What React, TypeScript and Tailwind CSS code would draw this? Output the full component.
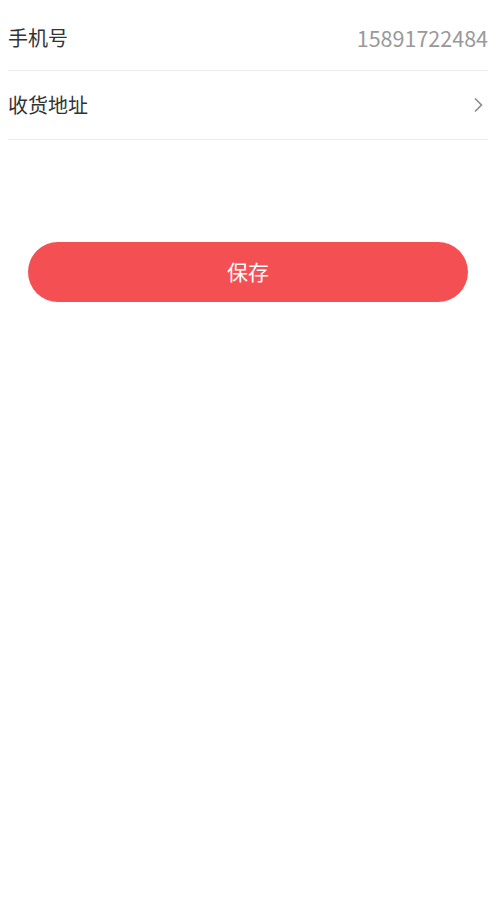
export default function App() {
  const font = { fontFamily: '"Noto Sans CJK SC", "Noto Sans", sans-serif' };
  return (
    <div className="w-[500px] h-[900px] bg-white" style={font}>
      <div className="pl-2 pr-3">
        <div className="h-[71px] pt-[6px] flex items-center justify-between border-b border-[#ececec]">
          <span className="text-[20px] text-[#333333]">手机号</span>
          <span className="text-[21.5px] text-[#999999]">15891722484</span>
        </div>
        <div className="h-[69px] flex items-center justify-between border-b border-[#ececec]">
          <span className="text-[20px] text-[#333333]">收货地址</span>
          <svg width="10" height="16" viewBox="0 0 10 16" className="mr-[5px]">
            <path d="M2 1.5 L8.5 8 L2 14.5" fill="none" stroke="#8a8a8a" strokeWidth="1.6" />
          </svg>
        </div>
      </div>
      <div className="px-7 pt-[102px]">
        <button className="w-[440px] h-[60px] rounded-full bg-[#f45054] text-white text-[21px] flex items-center justify-center">
          保存
        </button>
      </div>
    </div>
  );
}
